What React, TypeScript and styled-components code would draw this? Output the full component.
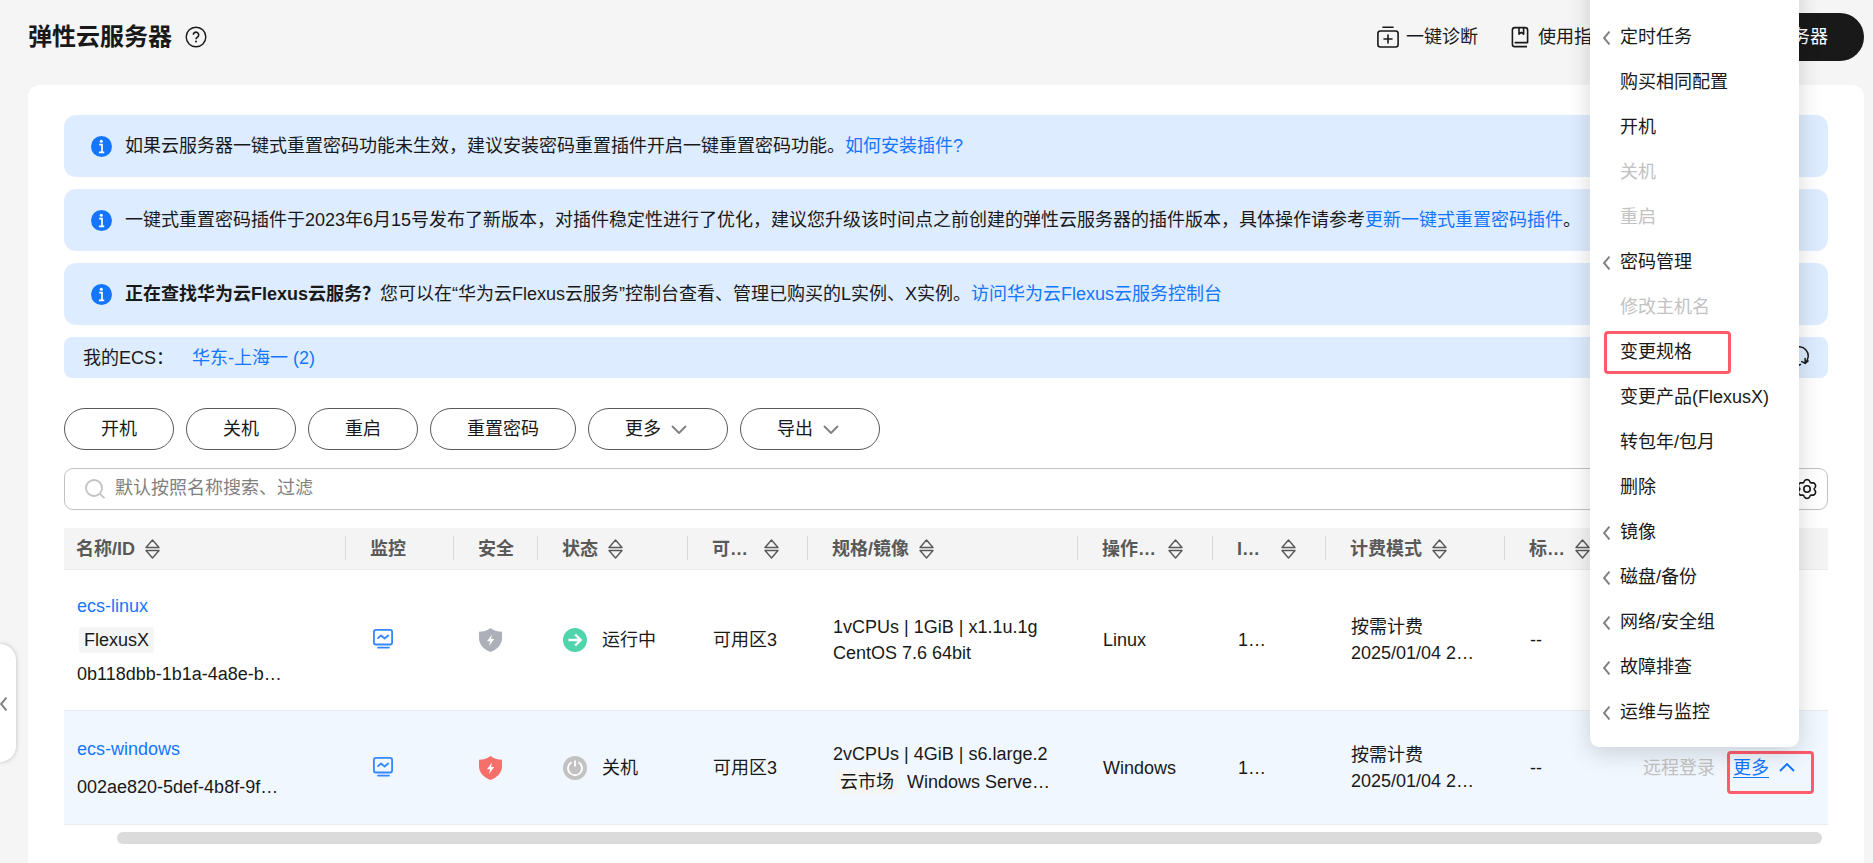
import React from 'react';
import styled, { createGlobalStyle, css } from 'styled-components';

const color = {
  text: '#191919',
  sub: '#595959',
  muted: '#808080',
  disabled: '#c2c2c2',
  link: '#1476ff',
  tint: '#deecff',
  hover: '#f0f7ff',
  line: '#ebebeb',
  page: '#f5f5f5',
  mark: '#ff5b6b',
};

const GlobalStyle = createGlobalStyle`
  *, *::before, *::after { box-sizing: border-box; }
  html { overflow: hidden; }
  body {
    margin: 0;
    background: ${color.page};
    color: ${color.text};
    font: 18px/26px "Liberation Sans", "Noto Sans CJK SC", sans-serif;
  }
  button, input { font: inherit; color: inherit; }
  button { cursor: pointer; }
  svg { display: block; flex: none; }
`;

const Page = styled.div`
  position: relative;
  display: flex;
  flex-direction: column;
  min-height: 100vh;
  padding: 13px 9px 0 28px;
`;

const TopBar = styled.header`
  display: flex;
  align-items: center;
  justify-content: space-between;
  height: 48px;
  margin-bottom: 24px;
`;

const TitleGroup = styled.div`
  display: flex;
  align-items: center;
  gap: 13px;
`;

const Title = styled.h1`
  margin: 0;
  font-size: 24px;
  line-height: 32px;
  font-weight: 700;
`;

const PlainButton = styled.button`
  display: inline-flex;
  align-items: center;
  gap: 7px;
  padding: 0;
  border: 0;
  background: none;
  white-space: nowrap;
`;

const TopActions = styled.div`
  display: flex;
  align-items: center;
  gap: 31px;
`;

const BuyButton = styled.button`
  height: 48px;
  margin-left: 7px;
  padding: 0 36px;
  border: 0;
  border-radius: 24px;
  background: ${color.text};
  color: #fff;
`;

const Card = styled.main`
  flex: 1;
  padding: 30px 36px 19px;
  border-radius: 12px 12px 0 0;
  background: #fff;
`;

const NoticeList = styled.div`
  display: flex;
  flex-direction: column;
  gap: 12px;
`;

const Notice = styled.div`
  display: flex;
  align-items: center;
  gap: 13px;
  min-height: 62px;
  padding: 0 27px;
  border-radius: 12px;
  background: ${color.tint};

  p { margin: 0; }
`;

const RegionBar = styled.div`
  display: flex;
  align-items: center;
  gap: 18px;
  min-height: 41px;
  padding: 0 19px;
  border-radius: 8px;
  background: ${color.tint};
`;

const RefreshButton = styled(PlainButton)`
  margin-left: auto;
`;

const Link = styled.a`
  color: ${color.link};
  text-decoration: none;
`;

const Toolbar = styled.div`
  display: flex;
  gap: 12px;
  margin: 30px 0 18px;
`;

const ToolButton = styled.button<{ $menu?: boolean }>`
  display: inline-flex;
  align-items: center;
  gap: 10px;
  height: 42px;
  padding: 0 ${p => (p.$menu ? 40 : 36)}px 0 36px;
  border: 1px solid ${color.sub};
  border-radius: 21px;
  background: #fff;
`;

const SearchBox = styled.label`
  display: flex;
  align-items: center;
  gap: 10px;
  height: 42px;
  margin-bottom: 18px;
  padding: 0 9px 0 20px;
  border: 1px solid ${color.disabled};
  border-radius: 9px;

  input {
    flex: 1;
    padding: 0 0 2px;
    border: 0;
    outline: 0;
    background: none;
  }
  input::placeholder { color: ${color.muted}; opacity: 1; }
`;

const Table = styled.table`
  width: 100%;
  table-layout: fixed;
  border-collapse: separate;
  border-spacing: 0;
`;

const HeadCell = styled.th`
  position: relative;
  height: 42px;
  padding: 0 0 0 25px;
  border-bottom: 1px solid ${color.line};
  background: #f4f4f4;
  color: ${color.sub};
  text-align: left;
  font-weight: 700;
  white-space: nowrap;

  &:first-child { padding-left: 12px; }
  &:not(:first-child)::before {
    content: '';
    position: absolute;
    left: 0;
    top: 8px;
    width: 1px;
    height: 24px;
    background: #d9d9d9;
  }
`;

const HeadContent = styled.span`
  display: flex;
  align-items: center;
  gap: 10px;
`;

const HeadLabel = styled.span<{ $width?: number }>`
  min-width: ${p => (p.$width ? `${p.$width}px` : 'auto')};
`;

const Row = styled.tr<{ $active?: boolean; $height: number }>`
  height: ${p => p.$height}px;
  background: ${p => (p.$active ? color.hover : '#fff')};
`;

const Cell = styled.td`
  padding: 0 0 0 26px;
  border-bottom: 1px solid ${color.line};
  white-space: nowrap;

  &:first-child { padding-left: 13px; }
`;

const NameStack = styled.div<{ $gap: number }>`
  display: flex;
  flex-direction: column;
  align-items: flex-start;
  gap: ${p => p.$gap}px;
`;

const Tag = styled.span`
  display: inline-block;
  margin: 0 2px;
  padding: 0 5px;
  border-radius: 3px;
  background: ${color.page};
`;

const ImageLine = styled.div`
  display: flex;
  gap: 6px;
  padding-top: 2px;
`;

const Status = styled.div`
  display: flex;
  align-items: center;
  gap: 15px;
`;

const RowActions = styled.div`
  display: flex;
  gap: 18px;
`;

const RowAction = styled(PlainButton)`
  line-height: 26px;
  color: ${color.link};
  gap: 10px;

  &:disabled { color: ${color.disabled}; }
`;

const MoreAnchor = styled.div`
  position: relative;
`;

const marked = css`
  content: '';
  position: absolute;
  border: 3px solid ${color.mark};
  border-radius: 4px;
  pointer-events: none;
`;

const MarkedAnchor = styled(MoreAnchor)`
  &::after {
    ${marked}
    top: -4px;
    left: -6px;
    width: 87px;
    height: 43px;
  }
  u { text-underline-offset: 3px; }
`;

const Menu = styled.ul`
  position: absolute;
  z-index: 10;
  right: -4px;
  bottom: calc(100% + 8px);
  width: 209px;
  margin: 0;
  padding: 12px 0;
  border-radius: 0 0 9px 9px;
  background: #fff;
  box-shadow: 0 6px 24px rgba(0, 0, 0, 0.16);
  list-style: none;
`;

const MenuItem = styled.li<{ $marked?: boolean }>`
  position: relative;

  ${p =>
    p.$marked &&
    css`
      &::after {
        ${marked}
        top: 1px;
        left: 14px;
        width: 127px;
        height: 43px;
      }
    `}
`;

const MenuButton = styled.button<{ $nested?: boolean }>`
  display: flex;
  align-items: center;
  gap: 10px;
  width: 100%;
  height: 45px;
  padding: 0 0 0 ${p => (p.$nested ? 13 : 30)}px;
  border: 0;
  background: none;
  text-align: left;

  &:disabled { color: ${color.disabled}; }
`;

const ScrollThumb = styled.div`
  height: 12px;
  margin: 7px 6px 0 53px;
  border-radius: 6px;
  background: #dbdbdb;
`;

const PanelHandle = styled.button`
  position: fixed;
  left: 0;
  top: 644px;
  display: flex;
  align-items: center;
  width: 16px;
  height: 118px;
  padding: 0;
  border: 0;
  border-radius: 0 16px 16px 0;
  background: #fff;
  box-shadow: 0 0 4px rgba(0, 0, 0, 0.25);
`;

const HelpIcon = () => (
  <svg width="22" height="22" viewBox="0 0 22 22" fill="none" stroke={color.text} strokeWidth="1.4">
    <circle cx="11" cy="11" r="9.8" />
    <path d="M8.3 8.8a2.7 2.7 0 1 1 4.3 2.2c-1 .7-1.6 1.2-1.6 2.3" strokeWidth="1.6" />
    <circle cx="11" cy="15.6" r="1" fill={color.text} stroke="none" />
  </svg>
);

const DiagnoseIcon = () => (
  <svg width="22" height="22" viewBox="0 0 22 22" fill="none" stroke={color.text} strokeWidth="1.6" strokeLinecap="round">
    <path d="M6 1.3h10" />
    <rect x=".9" y="5" width="20.2" height="16" rx="2.4" />
    <path d="M11 9v8M7 13h8" />
  </svg>
);

const GuideIcon = () => (
  <svg width="22" height="22" viewBox="0 0 22 22" fill="none" stroke={color.text} strokeWidth="1.6" strokeLinejoin="round">
    <path d="M5.6 20.6H18M5.6 20.6a2.2 2.2 0 0 1-2.2-2.2V4a2.4 2.4 0 0 1 2.4-2.4h10.4A2.4 2.4 0 0 1 18.6 4v12.6H5.6" />
    <path d="M10 1.8v6.4l2.3-1.8 2.3 1.8V1.8" />
  </svg>
);

const InfoIcon = () => (
  <svg width="21" height="21" viewBox="0 0 21 21">
    <circle cx="10.5" cy="10.5" r="10.5" fill={color.link} />
    <circle cx="10.3" cy="5.2" r="1.5" fill="#fff" />
    <path d="M8.2 8.6h2.8v7.3M7.9 16.3h5.3" fill="none" stroke="#fff" strokeWidth="1.7" />
  </svg>
);

const RefreshIcon = () => (
  <svg width="22" height="24" viewBox="0 0 22 24" fill="none" stroke={color.text} strokeWidth="1.5" strokeLinecap="round" strokeLinejoin="round">
    <path d="M6 3A8.600 8.600 0 0 1 18 17M14.800 15.600l3.300 1.800 3-2.400M18.100 17V12.500" />
    <path d="M13.500 18.500A8.600 8.600 0 0 1 3 5.500M6.200 6.900L2.900 5.100l-2 2.400" />
  </svg>
);

const SearchIcon = () => (
  <svg width="20" height="20" viewBox="0 0 20 20" fill="none" stroke={color.disabled} strokeWidth="1.8" strokeLinecap="round">
    <circle cx="9" cy="9" r="8" />
    <path d="M14.8 14.8l4.2 3.8" />
  </svg>
);

/* Six-lobed cog outline sampled around a circle */
const cogPath =
  Array.from({ length: 72 }, (_, i) => {
    const a = (i / 72) * Math.PI * 2;
    const r = 8.5 + 1.1 * Math.cos(6 * a) - 0.2 * Math.cos(12 * a);
    const x = 11 + r * Math.sin(a);
    const y = 11 - r * Math.cos(a);
    return `${i ? 'L' : 'M'}${x.toFixed(2)} ${y.toFixed(2)}`;
  }).join('') + 'Z';

const GearIcon = () => (
  <svg width="22" height="22" viewBox="0 0 22 22" fill="none" stroke={color.text} strokeWidth="1.6" strokeLinejoin="round">
    <path d={cogPath} />
    <circle cx="11" cy="11" r="3.2" />
  </svg>
);

const SortIcon = () => (
  <svg width="15" height="20" viewBox="0 0 15 20" fill="none" stroke={color.sub} strokeWidth="1.4" strokeLinejoin="round">
    <path d="M7.5 1l6.5 7.5H1zM7.5 19L1 11.5h13z" />
  </svg>
);

const directions = {
  down: 'M1 1l7 7 7-7',
  up: 'M1 8l7-7 7 7',
};

const Chevron = ({ dir, tint = color.muted }: { dir: 'up' | 'down'; tint?: string }) => (
  <svg width="16" height="9" viewBox="0 0 16 9" fill="none" stroke={tint} strokeWidth="1.9">
    <path d={directions[dir]} />
  </svg>
);

const BackChevron = () => (
  <svg width="7" height="15" viewBox="0 -1 7 15" fill="none" stroke={color.muted} strokeWidth="2">
    <path d="M6.500 .6L1 7l5.500 6.400" />
  </svg>
);

const MonitorIcon = () => (
  <svg width="24" height="22" viewBox="-2 0 24 22" fill="none" stroke="#3388ff" strokeWidth="1.8" strokeLinecap="round" strokeLinejoin="round">
    <rect x=".9" y=".9" width="18.2" height="14.6" rx="2" />
    <path d="M5 9.2l3-2.7 3.6 3 3.6-3M5 18.6h11" />
  </svg>
);

const ShieldIcon = ({ fill }: { fill: string }) => (
  <svg width="23" height="24" viewBox="0 0 23 24">
    <path d="M11.5 0C14 2.4 18.5 3.7 23 3.7V10c0 7-5 11.5-11.5 14C5 21.5 0 17 0 10V3.7C4.5 3.7 9 2.4 11.5 0z" fill={fill} />
    <path d="M13 6.5L8 13.2h3.2L10 18l5.2-6.9h-3.1z" fill="#fff" />
  </svg>
);

const RunningIcon = () => (
  <svg width="24" height="24" viewBox="0 0 24 24">
    <circle cx="12" cy="12" r="12" fill="#50d4ab" />
    <path d="M5.5 12h12M12.2 6.5l5.5 5.5-5.5 5.5" fill="none" stroke="#fff" strokeWidth="2.4" />
  </svg>
);

const StoppedIcon = () => (
  <svg width="24" height="24" viewBox="0 0 24 24">
    <circle cx="12" cy="12" r="12" fill={color.disabled} />
    <path d="M8.5 6.2a7 7 0 1 0 7 0M12 4.5v6" fill="none" stroke="#fff" strokeWidth="1.8" />
  </svg>
);

type Column = { label: string; width?: number; sortable?: boolean; labelWidth?: number };

const columns: Column[] = [
  { label: '名称/ID', width: 281, sortable: true },
  { label: '监控', width: 108 },
  { label: '安全', width: 84 },
  { label: '状态', width: 150, sortable: true },
  { label: '可…', width: 120, sortable: true, labelWidth: 42 },
  { label: '规格/镜像', width: 270, sortable: true },
  { label: '操作…', width: 135, sortable: true, labelWidth: 56 },
  { label: 'I…', width: 113, sortable: true, labelWidth: 34 },
  { label: '计费模式', width: 179, sortable: true },
  { label: '标…', width: 113, sortable: true },
  { label: '操作' },
];

type MenuEntry = { label: string; nested?: boolean; disabled?: boolean; marked?: boolean };

const menu: MenuEntry[] = [
  { label: '远程登录', disabled: true },
  { label: '定时任务', nested: true },
  { label: '购买相同配置' },
  { label: '开机' },
  { label: '关机', disabled: true },
  { label: '重启', disabled: true },
  { label: '密码管理', nested: true },
  { label: '修改主机名', disabled: true },
  { label: '变更规格', marked: true },
  { label: '变更产品(FlexusX)' },
  { label: '转包年/包月' },
  { label: '删除' },
  { label: '镜像', nested: true },
  { label: '磁盘/备份', nested: true },
  { label: '网络/安全组', nested: true },
  { label: '故障排查', nested: true },
  { label: '运维与监控', nested: true },
];

const MoreMenu = () => (
  <Menu>
    {menu.map(item => (
      <MenuItem key={item.label} $marked={item.marked}>
        <MenuButton type="button" $nested={item.nested} disabled={item.disabled}>
          {item.nested && <BackChevron />}
          {item.label}
        </MenuButton>
      </MenuItem>
    ))}
  </Menu>
);

export default function App() {
  return (
    <>
      <GlobalStyle />
      <Page>
        <TopBar>
          <TitleGroup>
            <Title>弹性云服务器</Title>
            <PlainButton type="button" aria-label="帮助">
              <HelpIcon />
            </PlainButton>
          </TitleGroup>
          <TopActions>
            <PlainButton type="button">
              <DiagnoseIcon />
              一键诊断
            </PlainButton>
            <PlainButton type="button">
              <GuideIcon />
              使用指南
            </PlainButton>
            <BuyButton type="button">购买弹性云服务器</BuyButton>
          </TopActions>
        </TopBar>

        <Card>
          <NoticeList>
            <Notice>
              <InfoIcon />
              <p>
                如果云服务器一键式重置密码功能未生效，建议安装密码重置插件开启一键重置密码功能。
                <Link href="#plugin">如何安装插件?</Link>
              </p>
            </Notice>
            <Notice>
              <InfoIcon />
              <p>
                一键式重置密码插件于2023年6月15号发布了新版本，对插件稳定性进行了优化，建议您升级该时间点之前创建的弹性云服务器的插件版本，具体操作请参考
                <Link href="#update">更新一键式重置密码插件</Link>。
              </p>
            </Notice>
            <Notice>
              <InfoIcon />
              <p>
                <strong>正在查找华为云Flexus云服务？</strong>
                您可以在“华为云Flexus云服务”控制台查看、管理已购买的L实例、X实例。
                <Link href="#flexus">访问华为云Flexus云服务控制台</Link>
              </p>
            </Notice>
            <RegionBar>
              <span>我的ECS：</span>
              <Link href="#region">华东-上海一 (2)</Link>
              <RefreshButton type="button" aria-label="刷新">
                <RefreshIcon />
              </RefreshButton>
            </RegionBar>
          </NoticeList>

          <Toolbar>
            <ToolButton type="button">开机</ToolButton>
            <ToolButton type="button">关机</ToolButton>
            <ToolButton type="button">重启</ToolButton>
            <ToolButton type="button">重置密码</ToolButton>
            <ToolButton type="button" $menu>
              更多
              <Chevron dir="down" />
            </ToolButton>
            <ToolButton type="button" $menu>
              导出
              <Chevron dir="down" />
            </ToolButton>
          </Toolbar>

          <SearchBox>
            <SearchIcon />
            <input type="text" placeholder="默认按照名称搜索、过滤" aria-label="搜索" />
            <PlainButton type="button" aria-label="设置">
              <GearIcon />
            </PlainButton>
          </SearchBox>

          <Table>
            <colgroup>
              {columns.map((c, i) => (
                <col key={i} width={c.width} />
              ))}
            </colgroup>
            <thead>
              <tr>
                {columns.map((c, i) => (
                  <HeadCell key={i} scope="col">
                    <HeadContent>
                      <HeadLabel $width={c.labelWidth}>{c.label}</HeadLabel>
                      {c.sortable && <SortIcon />}
                    </HeadContent>
                  </HeadCell>
                ))}
              </tr>
            </thead>
            <tbody>
              <Row $height={141}>
                <Cell>
                  <NameStack $gap={8}>
                    <Link href="#ecs-linux">ecs-linux</Link>
                    <Tag>FlexusX</Tag>
                    <span>0b118dbb-1b1a-4a8e-b…</span>
                  </NameStack>
                </Cell>
                <Cell><MonitorIcon /></Cell>
                <Cell><ShieldIcon fill="#adb0b8" /></Cell>
                <Cell>
                  <Status>
                    <RunningIcon />
                    运行中
                  </Status>
                </Cell>
                <Cell>可用区3</Cell>
                <Cell>
                  <div>1vCPUs | 1GiB | x1.1u.1g</div>
                  <div>CentOS 7.6 64bit</div>
                </Cell>
                <Cell>Linux</Cell>
                <Cell>1…</Cell>
                <Cell>
                  <div>按需计费</div>
                  <div>2025/01/04 2…</div>
                </Cell>
                <Cell>--</Cell>
                <Cell>
                  <RowActions>
                    <RowAction type="button">远程登录</RowAction>
                    <RowAction type="button">
                      更多
                      <Chevron dir="down" tint={color.link} />
                    </RowAction>
                  </RowActions>
                </Cell>
              </Row>
              <Row $height={114} $active>
                <Cell>
                  <NameStack $gap={12}>
                    <Link href="#ecs-windows">ecs-windows</Link>
                    <span>002ae820-5def-4b8f-9f…</span>
                  </NameStack>
                </Cell>
                <Cell><MonitorIcon /></Cell>
                <Cell><ShieldIcon fill="#f66f6a" /></Cell>
                <Cell>
                  <Status>
                    <StoppedIcon />
                    关机
                  </Status>
                </Cell>
                <Cell>可用区3</Cell>
                <Cell>
                  <div>2vCPUs | 4GiB | s6.large.2</div>
                  <ImageLine>
                    <Tag>云市场</Tag>
                    <span>Windows Serve…</span>
                  </ImageLine>
                </Cell>
                <Cell>Windows</Cell>
                <Cell>1…</Cell>
                <Cell>
                  <div>按需计费</div>
                  <div>2025/01/04 2…</div>
                </Cell>
                <Cell>--</Cell>
                <Cell>
                  <RowActions>
                    <RowAction type="button" disabled>远程登录</RowAction>
                    <MarkedAnchor>
                      <RowAction type="button" aria-expanded="true">
                        <u>更多</u>
                        <Chevron dir="up" tint={color.link} />
                      </RowAction>
                      <MoreMenu />
                    </MarkedAnchor>
                  </RowActions>
                </Cell>
              </Row>
            </tbody>
          </Table>
          <ScrollThumb />
        </Card>
        <PanelHandle type="button" aria-label="展开面板">
          <BackChevron />
        </PanelHandle>
      </Page>
    </>
  );
}
